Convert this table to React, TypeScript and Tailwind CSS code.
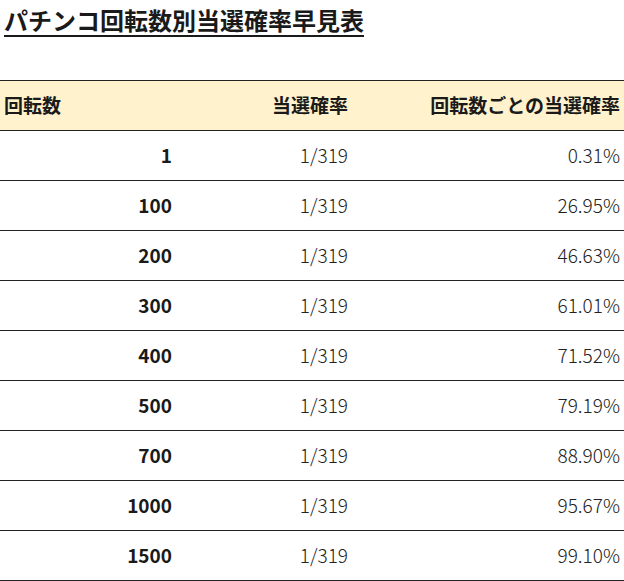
const rows: [string, string][] = [
  ["1", "0.31%"],
  ["100", "26.95%"],
  ["200", "46.63%"],
  ["300", "61.01%"],
  ["400", "71.52%"],
  ["500", "79.19%"],
  ["700", "88.90%"],
  ["1000", "95.67%"],
  ["1500", "99.10%"],
];

export default function App() {
  return (
    <div
      className="w-[624px] h-[581px] bg-white text-[#1a1a1a] overflow-hidden"
      style={{ fontFamily: '"Noto Sans CJK JP", "Noto Sans", sans-serif' }}
    >
      <h1 className="pl-[4px] pt-[4px] text-[24px] font-bold leading-[32px] underline underline-offset-[5px] decoration-[2px]">
        パチンコ回転数別当選確率早見表
      </h1>

      <table className="mt-[44px] w-full border-collapse text-[19px]">
        <thead>
          <tr className="bg-[#fff2cc] border-y border-[#222] h-[50px]">
            <th className="w-[176px] pl-[4px] text-left font-bold">回転数</th>
            <th className="w-[176px] pr-[4px] text-right font-bold">当選確率</th>
            <th className="pr-[4px] text-right font-bold">回転数ごとの当選確率</th>
          </tr>
        </thead>
        <tbody>
          {rows.map(([spins, pct]) => (
            <tr key={spins} className="border-b border-[#222] h-[50px]">
              <td className="pr-[4px] text-right font-bold">{spins}</td>
              <td className="pr-[4px] text-right font-light text-[#222]">1/319</td>
              <td className="pr-[4px] text-right font-light text-[#222]">{pct}</td>
            </tr>
          ))}
        </tbody>
      </table>
    </div>
  );
}
